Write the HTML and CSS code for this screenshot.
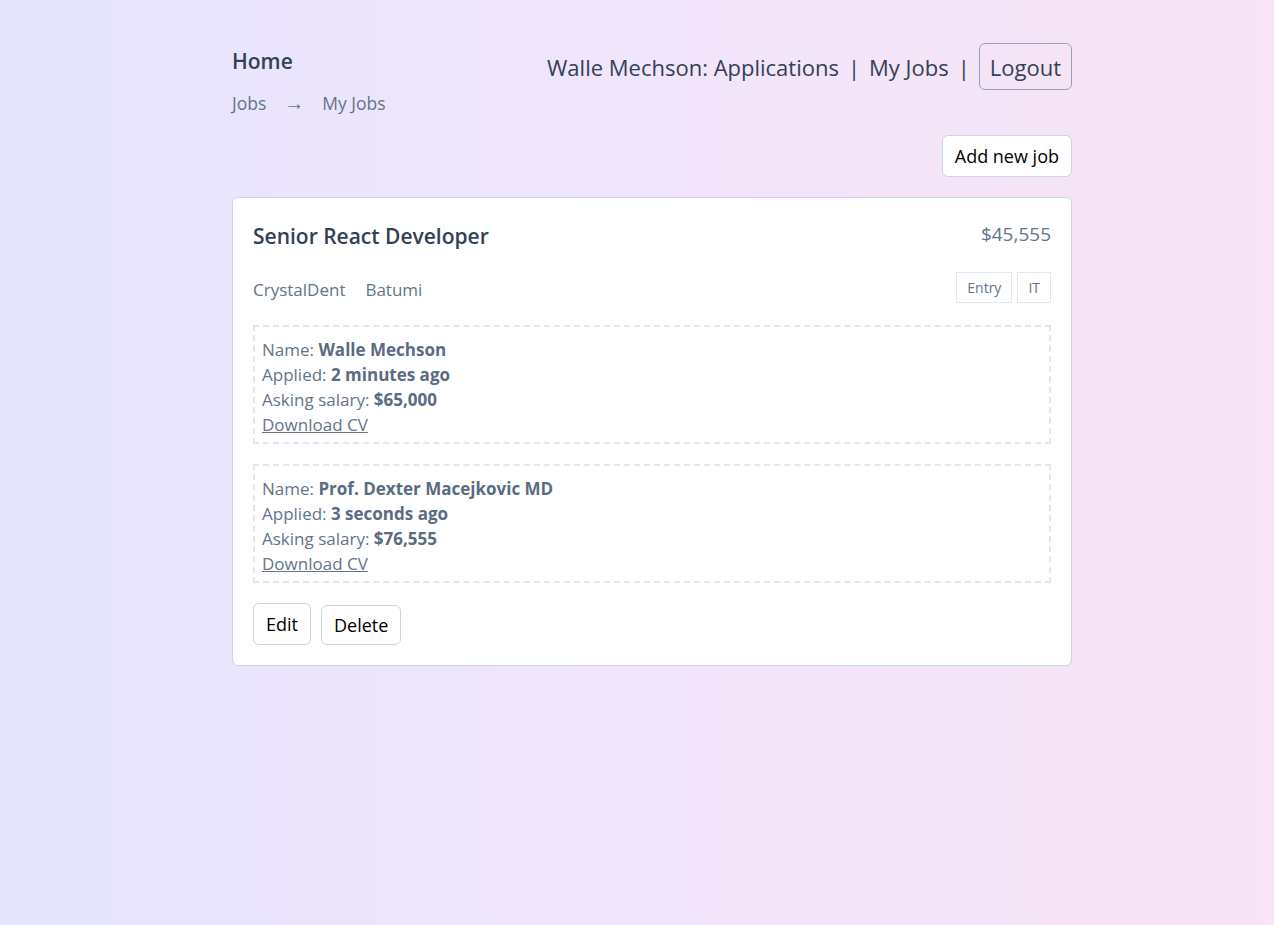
FILE: index.html
```html
<!DOCTYPE html>
<html lang="en">
<head>
<meta charset="utf-8">
<title>My Jobs</title>
<link rel="stylesheet" href="styles.css">
</head>
<body>
<div class="page">
  <div class="container">
    <header class="header">
      <div class="left">
        <a class="home">Home</a>
        <nav class="crumbs">
          <span>Jobs</span>
          <span class="arrow">→</span>
          <span>My Jobs</span>
        </nav>
      </div>
      <nav class="topnav">
        <span>Walle Mechson: Applications</span>
        <span class="sep">|</span>
        <span>My Jobs</span>
        <span class="sep">|</span>
        <button class="logout">Logout</button>
      </nav>
    </header>

    <div class="actions">
      <button class="btn">Add new job</button>
    </div>

    <div class="card">
      <div class="card-top">
        <h2 class="title">Senior React Developer</h2>
        <div class="salary">$45,555</div>
      </div>
      <div class="meta">
        <div class="place"><span>CrystalDent</span><span>Batumi</span></div>
        <div class="tags"><span class="tag">Entry</span><span class="tag">IT</span></div>
      </div>

      <div class="app">
        <div>Name: <b>Walle Mechson</b></div>
        <div>Applied: <b>2 minutes ago</b></div>
        <div>Asking salary: <b>$65,000</b></div>
        <div><a class="cv">Download CV</a></div>
      </div>
      <div class="app">
        <div>Name: <b>Prof. Dexter Macejkovic MD</b></div>
        <div>Applied: <b>3 seconds ago</b></div>
        <div>Asking salary: <b>$76,555</b></div>
        <div><a class="cv">Download CV</a></div>
      </div>

      <div class="card-actions">
        <button class="btn btn-edit">Edit</button>
        <button class="btn btn-delete">Delete</button>
      </div>
    </div>
  </div>
</div>
</body>
</html>
```

FILE: styles.css
```css
* { box-sizing: border-box; }
html, body { margin: 0; padding: 0; height: 100%; }
body {
  font-family: "Open Sans", "Noto Sans", sans-serif;
  color: #334155;
}
.page {
  min-height: 100%;
  background: linear-gradient(to right, #e5e5fd, #f2e5fb 55%, #f7e4f4);
  padding-top: 43px;
  padding-left: 30px;
}
.container {
  width: 840px;
  margin: 0 auto;
}
.header {
  display: flex;
  justify-content: space-between;
  align-items: flex-start;
}
.home {
  display: block;
  font-size: 21px;
  font-weight: 600;
  color: #334155;
  line-height: 34px;
  margin-top: 1px;
}
.crumbs {
  display: flex;
  align-items: center;
  gap: 18px;
  font-size: 17.5px;
  color: #64748b;
  margin-top: 13px;
}
.arrow { font-size: 20px; line-height: 20px; }
.topnav {
  display: flex;
  align-items: center;
  gap: 9px;
  font-size: 22px;
  color: #334155;
  font-weight: 500;
}
.logout {
  font: inherit;
  color: #334155;
  background: transparent;
  border: 1px solid #94a3b8;
  border-radius: 6px;
  height: 47px;
  padding: 0 10px;
  cursor: pointer;
}
.actions {
  display: flex;
  justify-content: flex-end;
  margin-top: 20px;
}
.btn {
  font-family: inherit;
  font-size: 18px;
  font-weight: 500;
  color: #000;
  background: #fff;
  border: 1px solid #cbd5e1;
  border-radius: 6px;
  height: 42px;
  padding: 0 12px;
  cursor: pointer;
}
.card {
  margin-top: 20px;
  background: #fff;
  border: 1px solid #cbd5e1;
  border-radius: 6px;
  padding: 20px;
}
.card-top {
  display: flex;
  justify-content: space-between;
  align-items: flex-start;
}
.title {
  margin: 0;
  font-size: 21px;
  font-weight: 600;
  color: #334155;
  line-height: 36px;
}
.salary {
  font-size: 19px;
  color: #64748b;
  line-height: 32px;
}
.meta {
  display: flex;
  justify-content: space-between;
  align-items: center;
  margin-top: 18px;
}
.place {
  display: flex;
  gap: 20px;
  font-size: 17px;
  color: #64748b;
  padding-top: 4px;
}
.tags { display: flex; gap: 5px; }
.tag {
  border: 1px solid #e2e8f0;
  font-size: 14px;
  color: #64748b;
  padding: 5px 10px;
  line-height: 19px;
}
.app {
  margin-top: 20px;
  border: 2px dashed #e2e8f0;
  padding: 10px 7px 5px;
  font-size: 17px;
  line-height: 25px;
  color: #64748b;
}
.meta + .app { margin-top: 22px; }
.app b { font-weight: 700; color: #5b6b82; }
.cv { color: #64748b; text-decoration: underline; }
.card-actions {
  display: flex;
  align-items: flex-end;
  gap: 10px;
  margin-top: 20px;
}
.btn-delete { height: 40px; }
```
